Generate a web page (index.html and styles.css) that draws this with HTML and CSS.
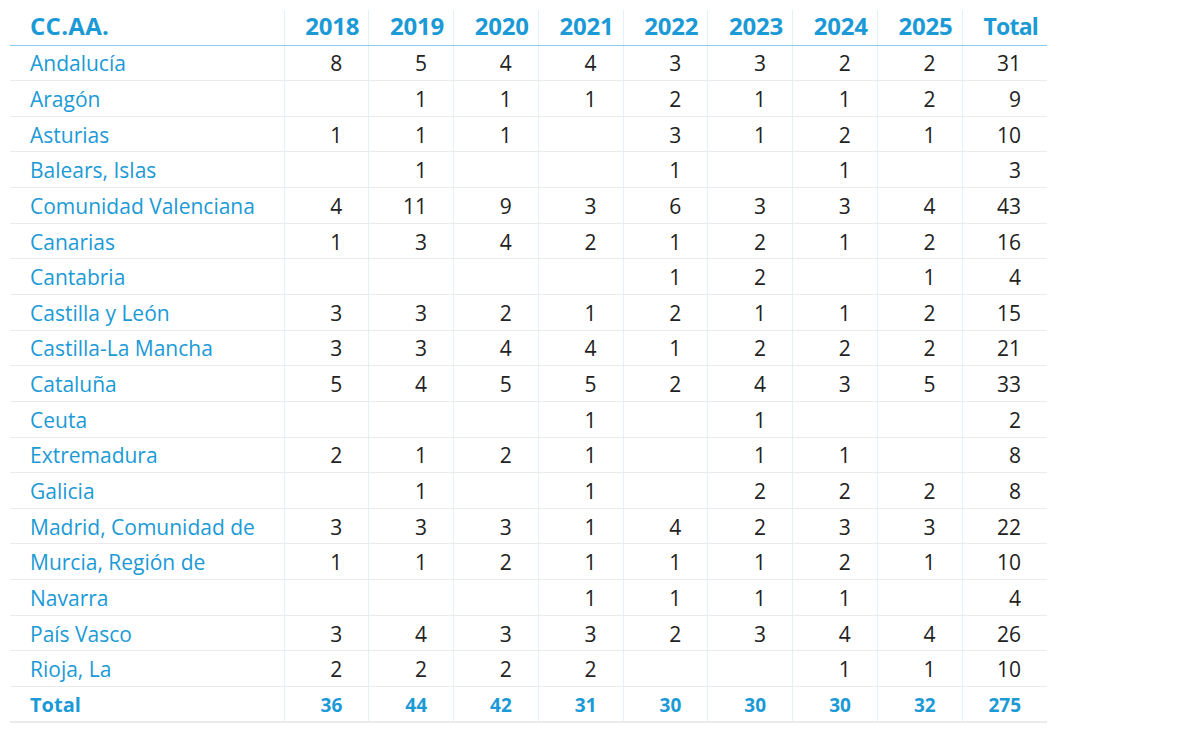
FILE: index.html
```html
<!DOCTYPE html>
<html lang="es">
<head>
<meta charset="utf-8">
<title>CC.AA.</title>
<link rel="stylesheet" href="styles.css">
</head>
<body>
<table class="tbl">
  <thead>
    <tr><th class="name">CC.AA.</th><th>2018</th><th>2019</th><th>2020</th><th>2021</th><th>2022</th><th>2023</th><th>2024</th><th>2025</th><th class="tot">Total</th></tr>
  </thead>
  <tbody>
    <tr><td class="name">Andalucía</td><td>8</td><td>5</td><td>4</td><td>4</td><td>3</td><td>3</td><td>2</td><td>2</td><td>31</td></tr>
    <tr><td class="name">Aragón</td><td></td><td>1</td><td>1</td><td>1</td><td>2</td><td>1</td><td>1</td><td>2</td><td>9</td></tr>
    <tr><td class="name">Asturias</td><td>1</td><td>1</td><td>1</td><td></td><td>3</td><td>1</td><td>2</td><td>1</td><td>10</td></tr>
    <tr><td class="name">Balears, Islas</td><td></td><td>1</td><td></td><td></td><td>1</td><td></td><td>1</td><td></td><td>3</td></tr>
    <tr><td class="name">Comunidad Valenciana</td><td>4</td><td>11</td><td>9</td><td>3</td><td>6</td><td>3</td><td>3</td><td>4</td><td>43</td></tr>
    <tr><td class="name">Canarias</td><td>1</td><td>3</td><td>4</td><td>2</td><td>1</td><td>2</td><td>1</td><td>2</td><td>16</td></tr>
    <tr><td class="name">Cantabria</td><td></td><td></td><td></td><td></td><td>1</td><td>2</td><td></td><td>1</td><td>4</td></tr>
    <tr><td class="name">Castilla y León</td><td>3</td><td>3</td><td>2</td><td>1</td><td>2</td><td>1</td><td>1</td><td>2</td><td>15</td></tr>
    <tr><td class="name">Castilla-La Mancha</td><td>3</td><td>3</td><td>4</td><td>4</td><td>1</td><td>2</td><td>2</td><td>2</td><td>21</td></tr>
    <tr><td class="name">Cataluña</td><td>5</td><td>4</td><td>5</td><td>5</td><td>2</td><td>4</td><td>3</td><td>5</td><td>33</td></tr>
    <tr><td class="name">Ceuta</td><td></td><td></td><td></td><td>1</td><td></td><td>1</td><td></td><td></td><td>2</td></tr>
    <tr><td class="name">Extremadura</td><td>2</td><td>1</td><td>2</td><td>1</td><td></td><td>1</td><td>1</td><td></td><td>8</td></tr>
    <tr><td class="name">Galicia</td><td></td><td>1</td><td></td><td>1</td><td></td><td>2</td><td>2</td><td>2</td><td>8</td></tr>
    <tr><td class="name">Madrid, Comunidad de</td><td>3</td><td>3</td><td>3</td><td>1</td><td>4</td><td>2</td><td>3</td><td>3</td><td>22</td></tr>
    <tr><td class="name">Murcia, Región de</td><td>1</td><td>1</td><td>2</td><td>1</td><td>1</td><td>1</td><td>2</td><td>1</td><td>10</td></tr>
    <tr><td class="name">Navarra</td><td></td><td></td><td></td><td>1</td><td>1</td><td>1</td><td>1</td><td></td><td>4</td></tr>
    <tr><td class="name">País Vasco</td><td>3</td><td>4</td><td>3</td><td>3</td><td>2</td><td>3</td><td>4</td><td>4</td><td>26</td></tr>
    <tr><td class="name">Rioja, La</td><td>2</td><td>2</td><td>2</td><td>2</td><td></td><td></td><td>1</td><td>1</td><td>10</td></tr>
  </tbody>
  <tfoot>
    <tr><td class="name">Total</td><td>36</td><td>44</td><td>42</td><td>31</td><td>30</td><td>30</td><td>30</td><td>32</td><td>275</td></tr>
  </tfoot>
</table>
</body>
</html>
```

FILE: styles.css
```css
html, body {
  margin: 0;
  padding: 0;
  background: #ffffff;
}

body {
  padding: 10px 0 0 10px;
  font-family: "Open Sans", "Noto Sans", "Liberation Sans", sans-serif;
}

.tbl {
  border-collapse: collapse;
  table-layout: fixed;
  width: 1037px;
}

.tbl th,
.tbl td {
  box-sizing: border-box;
  text-align: right;
  padding: 0 26px 0 0;
  border-left: 1px solid #e3f1f9;
  white-space: nowrap;
}

.tbl th.name,
.tbl td.name {
  width: 274px;
  text-align: left;
  padding-left: 20px;
  border-left: none;
}

.tbl thead th {
  height: 35px;
  font-size: 24px;
  font-weight: 700;
  color: #1b9ad6;
  padding-right: 9px;
  padding-bottom: 7px;
  vertical-align: bottom;
  border-bottom: 1.5px solid #8ccbe9;
  line-height: 1;
  letter-spacing: -0.2px;
}

.tbl thead th.name {
  letter-spacing: 0.3px;
}

.tbl thead th.tot {
  font-size: 23px;
  letter-spacing: -0.8px;
}

.tbl tbody td {
  height: 35.65px;
  font-size: 21px;
  color: #222222;
  border-bottom: 1.5px solid #ebebeb;
  line-height: 1;
  padding-top: 2px;
}

.tbl tbody td.name {
  color: #1b9ad6;
}

.tbl tfoot td {
  height: 35.65px;
  font-size: 19px;
  font-weight: 700;
  color: #1b9ad6;
  border-bottom: 2px solid #ebebeb;
  line-height: 1;
  padding-top: 2px;
}

.tbl tfoot td.name {
  font-size: 20px;
}
```
